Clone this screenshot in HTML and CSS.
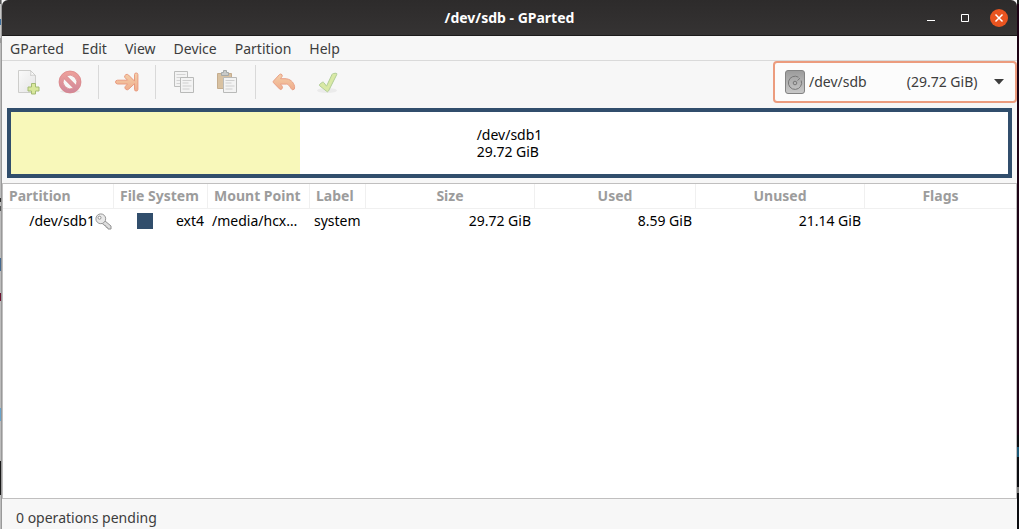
FILE: index.html
```
<!DOCTYPE html>
<html lang="en">
<head>
<meta charset="utf-8">
<title>/dev/sdb - GParted</title>
<link rel="stylesheet" href="styles.css">
</head>
<body>
<div class="desktop">
<div class="edge edge-left"></div>
<div class="window">
  <header class="titlebar">
    <span></span>
    <h1 class="title">/dev/sdb - GParted</h1>
    <div class="controls">
      <button class="control" aria-label="Minimize"><svg width="18" height="18" viewBox="0 0 18 18"><path d="M5 11.500h8" stroke="#fff"/></svg></button>
      <button class="control" aria-label="Maximize"><svg width="18" height="18" viewBox="0 0 18 18"><path d="M5.500 5.500h7v7h-7z" fill="none" stroke="#fff"/></svg></button>
      <button class="control close" aria-label="Close"><svg width="18" height="18" viewBox="0 0 18 18"><path d="M5.500 5.500l7 7m0-7l-7 7" stroke="#fff" stroke-width="1.500"/></svg></button>
    </div>
  </header>
  <nav class="menubar">
    <button class="menu">GParted</button>
    <button class="menu">Edit</button>
    <button class="menu">View</button>
    <button class="menu">Device</button>
    <button class="menu">Partition</button>
    <button class="menu">Help</button>
  </nav>
  <div class="toolbar">
    <button class="tool" aria-label="New partition" disabled>
      <svg width="24" height="24" viewBox="-1 0 24 24">
        <defs><linearGradient id="paper" x2="1" y2="1"><stop stop-color="#fafafa"/><stop offset="1" stop-color="#e5e5e5"/></linearGradient></defs>
        <path d="M2.500.500h12l5 5v17h-17z" fill="url(#paper)" stroke="#cdcdcb"/>
        <path d="M14.500.500q1 2.500 0 5q2.500-1 5 0z" fill="#fff" stroke="#cdcdcb"/>
        <path d="M15.500 13.500h4v3.500h3.500v4h-3.500v3h-4v-3h-3.500v-4h3.500z" fill="#d9e89c" stroke="#a4bb74" stroke-linejoin="round"/>
      </svg>
    </button>
    <button class="tool" aria-label="Delete" disabled>
      <svg width="24" height="24" viewBox="0 0 24 24">
        <defs><linearGradient id="stop" x2="0" y2="1"><stop stop-color="#efa19a"/><stop offset="1" stop-color="#cf879b"/></linearGradient></defs>
        <ellipse cx="12" cy="21.500" rx="10" ry="1.500" fill="#e6e6e6"/>
        <path fill-rule="evenodd" d="M12 1a11 11 0 1 0 0 22a11 11 0 1 0 0-22zM8.500 5.800L18.200 15.500A7.300 7.300 0 0 0 8.500 5.800zM5.800 8.500A7.300 7.300 0 0 0 15.500 18.200z" fill="url(#stop)" stroke="#d97f83" stroke-width=".7"/>
      </svg>
    </button>
    <span class="separator"></span>
    <button class="tool" aria-label="Resize or move" disabled>
      <svg width="24" height="24" viewBox="0 0 24 24">
        <defs><linearGradient id="orange" x2="0" y2="1"><stop stop-color="#f4cfa9"/><stop offset="1" stop-color="#efad8c"/></linearGradient></defs>
        <path d="M2.500 10.200h10L9.800 7.400Q9 5.600 11 4.500q1.400-.6 2.600.6l5.900 6V4.500q0-1.500 1.700-1.500t1.700 1.500v15q0 1.500-1.700 1.500t-1.700-1.500v-5.800l-5.900 5.500q-1.300 1.200-2.700.2-1.800-1.300-.6-3l2.200-2.400h-10q-2-.3-2-2t2-1.800z" fill="url(#orange)" stroke="#e99b80"/>
      </svg>
    </button>
    <span class="separator"></span>
    <button class="tool" aria-label="Copy" disabled>
      <svg width="24" height="24" viewBox="0 0 24 24">
        <path d="M2.500 1.500h13v15h-13z" fill="#f3f3f3" stroke="#bdbebd"/>
        <path d="M4.500 4.500h9m-9 3h8m-8 3h5m-5 3h4" stroke="#d3d3d3"/>
        <path d="M8.500 7.500h13v15h-13z" fill="#f3f3f3" stroke="#b9bab9"/>
        <path d="M10.500 10.500h9m-9 2.500h6m-6 3h9m-9 3h7" stroke="#cfcfcf"/>
      </svg>
    </button>
    <button class="tool" aria-label="Paste" disabled>
      <svg width="24" height="24" viewBox="0 0 24 24">
        <path d="M2.500 3.500h14v15h-14z" fill="#d8c1a1" stroke="#c5ad8e"/>
        <path d="M6.500 5.500v-3h2v-2h3v2h2v3z" fill="#c8cac9" stroke="#a5a8a7"/>
        <path d="M8.500 7.500h13v15h-13z" fill="#f3f3f3" stroke="#b9bab9"/>
        <path d="M10.500 10.500h9m-9 2.500h6m-6 3h9m-9 3h7" stroke="#cfcfcf"/>
      </svg>
    </button>
    <span class="separator"></span>
    <button class="tool" aria-label="Undo" disabled>
      <svg width="24" height="24" viewBox="0 0 24 24">
        <path d="M1.500 11L7.500 4.500Q9 3.300 10 4.800q.7 1.300-.5 2.600l-1 1.300H13c5 .1 8.500 3 9.600 7.800q.5 3.200-1.600 3.300c-2.500.2-2.700-5.300-6.500-5.700H8.500l1.300 1.600q1.200 1.500.3 3-1.200 1.500-2.600.2l-6-6.200q-.8-.9 0-1.700z" fill="url(#orange)" stroke="#e9a087"/>
      </svg>
    </button>
    <button class="tool" aria-label="Apply" disabled>
      <svg width="24" height="24" viewBox="0 0 24 24">
        <ellipse cx="12" cy="20.500" rx="10" ry="2.500" fill="#ebebeb"/>
        <path d="M4.500 14.500l2.800-2.200q1.200-.5 1.800.6l2.400 3.300 5.500-11.700q.5-.9 1.500-1l2.500-.3q1.300.2.700 1.500L13.500 21q-.9 1.400-2 .2L4.600 15.700q-.5-.7-.1-1.200z" fill="#d9e9a5" stroke="#b1ce97"/>
      </svg>
    </button>
    <label class="device">
      <svg class="disk" width="20" height="24" viewBox="0 0 20 24">
        <defs><linearGradient id="disk" x2="0" y2="1"><stop stop-color="#9b9b9b"/><stop offset="1" stop-color="#c9c9c9"/></linearGradient></defs>
        <rect x=".5" y=".5" width="19" height="23" rx="2.500" fill="url(#disk)" stroke="#838383"/>
        <path d="M13.500 7.200A6.600 6.600 0 1 0 16.200 10.500M15 8.200L12.500 10.500" fill="none" stroke="#777"/>
        <circle cx="10" cy="13" r="1.800" fill="none" stroke="#777"/>
      </svg>
      <select class="device-select" aria-label="Device">
        <option>/dev/sdb&nbsp;&nbsp;&nbsp;&nbsp;&nbsp;&nbsp;&nbsp;&nbsp;&nbsp;&nbsp;&nbsp;(29.72 GiB)</option>
      </select>
      <svg class="caret" width="10" height="6" viewBox="0 0 10 6"><path d="M0 0h10L5 5.500z" fill="#3d3d3d"/></svg>
    </label>
  </div>
  <main class="content">
    <section class="disk-map" aria-label="Disk layout">
      <div class="used"></div>
      <p class="map-label">/dev/sdb1<br>29.72 GiB</p>
    </section>
    <div class="table-wrap">
      <table class="partitions">
        <colgroup><col class="c-part"><col class="c-fs"><col class="c-mount"><col class="c-label"><col class="c-size"><col class="c-used"><col class="c-size"><col></colgroup>
        <thead><tr><th>Partition</th><th>File System</th><th>Mount Point</th><th>Label</th><th class="mid">Size</th><th class="mid">Used</th><th class="mid">Unused</th><th class="mid">Flags</th></tr></thead>
        <tbody><tr>
          <td class="part"><span class="part-name">/dev/sdb1
            <svg width="17" height="17" viewBox="0 0 17 17">
              <path d="M9.500 7.500l6.500 5.500v3h-3l-.5-1.500-1.500-.3-.4-1.600-1.600-.4-2-2z" fill="#ddd" stroke="#929292"/>
              <circle cx="5.800" cy="5.800" r="4.900" fill="#e9e9e9" stroke="#969696"/>
              <circle cx="4.500" cy="4.700" r="1.500" fill="#fff" stroke="#929292"/>
            </svg></span></td>
          <td><span class="fs"><i class="swatch"></i>ext4</span></td>
          <td>/media/hcx…</td>
          <td>system</td>
          <td class="num">29.72 GiB</td><td class="num">8.59 GiB</td><td class="num">21.14 GiB</td><td></td>
        </tr></tbody>
      </table>
    </div>
  </main>
  <footer class="status">0 operations pending</footer>
</div>
<div class="edge edge-right"></div>
</div>
</body>
</html>
```
FILE: styles.css
```
* { box-sizing: border-box; }
body { margin: 0; color: #3d3d3d; font: 14px/18px "Noto Sans", "Open Sans", sans-serif; }
button { border: 0; padding: 0; background: none; color: inherit; font: inherit; }
svg { display: block; overflow: visible; }

.desktop { display: flex; min-height: 100vh; background: #1d0315; }
.edge { flex: 0 0 2px; }
.edge-left {
  border-right: 1px solid #999;
  background: linear-gradient(#555 0 4px, #c8c8c8 4px 19px, #3f6f9d 19px 25px, #c8c8c8 25px 38px, #999 38px 43px, #bcbcbc 43px 198px, #333 198px 202px, #bcbcbc 202px 206px, #555 206px 211px, #bcbcbc 211px 258px, #45698f 258px 271px, #bcbcbc 271px 293px, #6b1230 293px 301px, #bcbcbc 301px 408px, #6aa4cb 408px 421px, #bcbcbc 421px 461px, #181818 461px 495px, #bcbcbc 495px);
}
.edge-right { background: linear-gradient(#222 0 4px, #1d0315 4px 435px, #0b0c10 435px 447px, #1b5774 447px 457px, #0b0c10 457px 487px, #777 487px 493px, #0b0c10 493px); }
.window { display: flex; flex: 1; flex-direction: column; min-width: 0; background: #f7f7f7; }

.titlebar {
  display: grid; grid-template-columns: 1fr auto 1fr; align-items: center;
  height: 36px; padding: 0 9px; border-bottom: 1px solid #1c1b1b; border-radius: 6px 6px 0 0;
  background: linear-gradient(#2d2b2b, #353333); color: #fff;
}
.title { margin: 0; font-size: 14px; line-height: 18px; }
.controls { display: flex; justify-content: flex-end; gap: 16px; }
.control { width: 18px; height: 18px; border-radius: 50%; }
.close { background: #e95420; }

.menubar { display: flex; gap: 18px; height: 25px; padding: 1px 8px 0; border-bottom: 1px solid #dadada; }

.toolbar { display: flex; align-items: center; gap: 1px; height: 42px; padding-left: 4px; }
.tool { display: grid; place-items: center; width: 42px; height: 42px; }
.separator { width: 1px; height: 34px; margin: 0 6px; background: #d9d9d9; }
.device {
  display: flex; align-items: center; width: 244px; height: 42px; margin-left: auto; padding: 0 11px 0 10px;
  border: 2px solid #ec9c7e; border-radius: 4px; background: #fcfcfc;
}
.disk { flex: none; }
.device-select { flex: 1; min-width: 0; padding: 0 0 0 4px; border: 0; outline: 0; appearance: none; background: none; color: inherit; font: inherit; }
.caret { flex: none; }

.content { display: flex; flex: 1; flex-direction: column; gap: 5px; padding-top: 5px; }
.disk-map { display: grid; height: 70px; margin: 0 5px; border: 4px solid #314e6c; background: #fff; color: #000; }
.used { grid-area: 1 / 1; width: 29%; background: #f8f8ba; }
.map-label { grid-area: 1 / 1; place-self: center; margin: 0; line-height: 17px; }

.table-wrap { flex: 1; border: 1px solid #c0bfbf; background: #fff; color: #000; }
.partitions { width: 100%; table-layout: fixed; border-collapse: separate; border-spacing: 0; }
.c-part { width: 111px; }
.c-fs { width: 94px; }
.c-mount { width: 102px; }
.c-label { width: 56px; }
.c-size { width: 169px; }
.c-used { width: 161px; }
th { height: 25px; padding: 0 6px; border-right: 1px solid #f0f0f0; border-bottom: 1px solid #f0f0f0; color: #9c9c9c; font-weight: bold; text-align: left; white-space: nowrap; }
th:last-child { border-right: 0; }
td { height: 24px; padding: 0 4px; white-space: nowrap; }
.part { padding-right: 2px; }
.mid { text-align: center; }
.num { text-align: right; }
.part-name, .fs { display: flex; align-items: center; justify-content: flex-end; }
.swatch { width: 16px; height: 16px; margin-right: auto; margin-left: 19px; background: #314e6c; }
.status { height: 30px; padding: 10px 14px 0; }
```
